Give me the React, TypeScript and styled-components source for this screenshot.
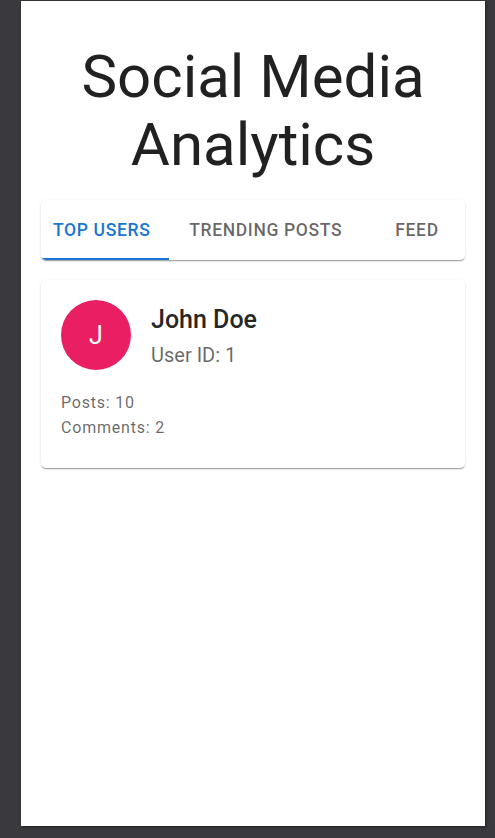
import React, { useState } from "react";
import styled, { createGlobalStyle } from "styled-components";

const GlobalStyle = createGlobalStyle`
  html, body {
    margin: 0;
    padding: 0;
    background: #3a3a3e;
    font-family: Roboto, "Noto Sans", "Liberation Sans", sans-serif;
  }
  * { box-sizing: border-box; }
`;

const Screen = styled.div`
  width: 495px;
  height: 838px;
  padding: 1px 0 0 21px;
  background: #3a3a3e;
`;

const Page = styled.main`
  width: 464px;
  height: 825px;
  background: #ffffff;
  box-shadow: 1px 1px 3px rgba(0, 0, 0, 0.45);
  padding: 0 20px;
  display: flex;
  flex-direction: column;
`;

const Title = styled.h1`
  margin: 42px 0 21px;
  font-family: Roboto, sans-serif;
  font-weight: 400;
  font-size: 60px;
  line-height: 68px;
  text-align: center;
  color: rgba(0, 0, 0, 0.87);
`;

const TabBar = styled.div`
  display: flex;
  justify-content: space-between;
  height: 60px;
  background: #fff;
  border-radius: 5px;
  overflow: hidden;
  box-shadow: 0 2px 1px -1px rgba(0, 0, 0, 0.2), 0 1px 1px 0 rgba(0, 0, 0, 0.14),
    0 1px 3px 0 rgba(0, 0, 0, 0.12);
`;

const Tab = styled.button<{ $active?: boolean }>`
  position: relative;
  flex: 0 0 auto;
  min-width: 96px;
  height: 60px;
  padding: 0 12px;
  border: none;
  background: transparent;
  font-family: Roboto, sans-serif;
  font-weight: 500;
  font-size: 17.5px;
  letter-spacing: 0.65px;
  text-transform: uppercase;
  color: ${(p) => (p.$active ? "#1976d2" : "rgba(0, 0, 0, 0.6)")};
  cursor: pointer;

  &::after {
    content: "";
    position: absolute;
    left: 0;
    bottom: 0;
    width: 128px;
    height: 2px;
    background: ${(p) => (p.$active ? "#1976d2" : "transparent")};
  }
`;

const Card = styled.section`
  margin-top: 20px;
  background: #fff;
  border-radius: 5px;
  padding: 20px 20px 28px;
  box-shadow: 0 2px 1px -1px rgba(0, 0, 0, 0.2), 0 1px 1px 0 rgba(0, 0, 0, 0.14),
    0 1px 3px 0 rgba(0, 0, 0, 0.12);
`;

const UserRow = styled.div`
  display: flex;
  align-items: center;
  gap: 20px;
  margin-bottom: 20px;
`;

const Avatar = styled.div<{ $color: string }>`
  width: 70px;
  height: 70px;
  border-radius: 50%;
  background: ${(p) => p.$color};
  color: #fff;
  display: flex;
  align-items: center;
  justify-content: center;
  font-size: 25px;
  font-weight: 400;
`;

const UserInfo = styled.div`
  display: flex;
  flex-direction: column;
`;

const Name = styled.div`
  font-size: 25px;
  font-weight: 500;
  line-height: 40px;
  color: rgba(0, 0, 0, 0.87);
`;

const UserId = styled.div`
  font-size: 20px;
  line-height: 30px;
  color: rgba(0, 0, 0, 0.6);
`;

const Stat = styled.div`
  font-size: 16px;
  line-height: 25px;
  letter-spacing: 0.8px;
  color: rgba(0, 0, 0, 0.6);
`;

const tabs = ["Top Users", "Trending Posts", "Feed"];

export default function App() {
  const [active, setActive] = useState(0);
  return (
    <>
      <GlobalStyle />
      <Screen>
        <Page>
          <Title>Social Media Analytics</Title>
          <TabBar>
            {tabs.map((t, i) => (
              <Tab key={t} $active={i === active} onClick={() => setActive(i)}>
                {t}
              </Tab>
            ))}
          </TabBar>
          <Card>
            <UserRow>
              <Avatar $color="#e91e63">J</Avatar>
              <UserInfo>
                <Name>John Doe</Name>
                <UserId>User ID: 1</UserId>
              </UserInfo>
            </UserRow>
            <Stat>Posts: 10</Stat>
            <Stat>Comments: 2</Stat>
          </Card>
        </Page>
      </Screen>
    </>
  );
}
